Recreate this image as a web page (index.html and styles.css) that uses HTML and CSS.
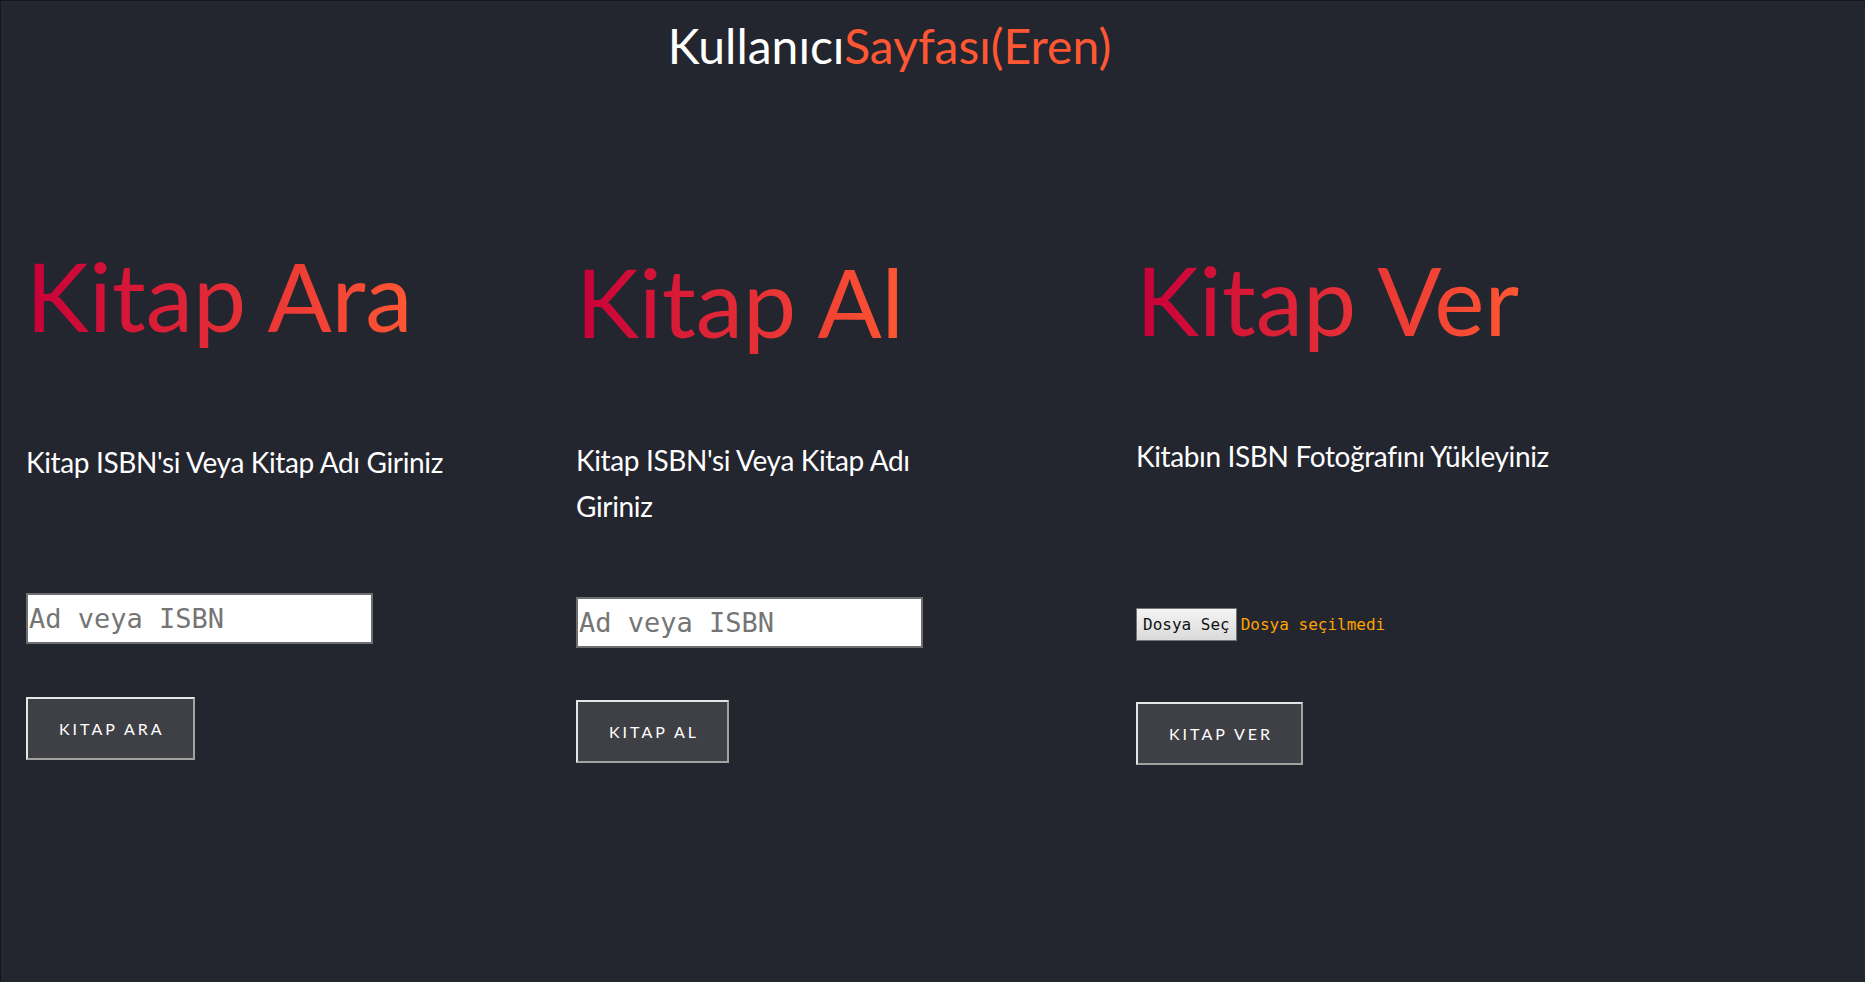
FILE: index.html
```html
<!DOCTYPE html>
<html lang="tr">
<head>
<meta charset="utf-8">
<title>Kullanıcı Sayfası</title>
<link rel="stylesheet" href="styles.css">
</head>
<body>
<header class="page-header">
  <h1 class="page-title"><span class="title-main">Kullanıcı</span><span class="title-accent">Sayfası(Eren)</span></h1>
</header>
<main class="panels">
  <section class="panel panel--ara">
    <h2 class="panel-title"><span class="grad">Kitap Ara</span></h2>
    <p class="panel-text">Kitap ISBN'si Veya Kitap Adı Giriniz</p>
    <input class="isbn-input" type="text" placeholder="Ad veya ISBN">
    <button class="action-btn" type="button">KITAP ARA</button>
  </section>
  <section class="panel panel--al">
    <h2 class="panel-title"><span class="grad">Kitap Al</span></h2>
    <p class="panel-text">Kitap ISBN'si Veya Kitap Adı Giriniz</p>
    <input class="isbn-input" type="text" placeholder="Ad veya ISBN">
    <button class="action-btn" type="button">KITAP AL</button>
  </section>
  <section class="panel panel--ver">
    <h2 class="panel-title"><span class="grad">Kitap Ver</span></h2>
    <p class="panel-text">Kitabın ISBN Fotoğrafını Yükleyiniz</p>
    <div class="file-row">
      <span class="file-btn">Dosya Seç</span>
      <span class="file-status">Dosya seçilmedi</span>
    </div>
    <button class="action-btn" type="button">KITAP VER</button>
  </section>
</main>
</body>
</html>
```
FILE: styles.css
```css
html, body {
  margin: 0;
  padding: 0;
}
body {
  background: #23252f;
  border-top: 1px solid #15161b;
  border-left: 1px solid #15161b;
  min-height: 981px;
  box-sizing: border-box;
  font-family: Lato, "Open Sans", sans-serif;
  color: #ffffff;
  overflow: hidden;
}
.page-header {
  padding: 15px 87px 0 0;
  text-align: center;
}
.page-title {
  margin: 0;
  font-size: 48px;
  line-height: 60px;
  font-weight: 400;
}
.title-main { color: #ffffff; }
.title-accent { color: #ff5733; }

.panels {
  display: flex;
  align-items: flex-start;
  padding-left: 25px;
}
.panel {
  display: flex;
  flex-direction: column;
  align-items: flex-start;
}
.panel--ara { width: 550px; }
.panel--al { width: 560px; }
.panel--ver { width: 600px; }

.panel-title {
  margin: 162px 0 0;
  font-size: 95px;
  line-height: 114px;
  font-weight: 400;
}
.grad {
  display: inline-block;
  background: linear-gradient(to right, #c70039, #ff5733);
  -webkit-background-clip: text;
  background-clip: text;
  color: transparent;
}
.panel-text {
  margin: 87px 0 0;
  font-size: 28px;
  line-height: 46px;
  letter-spacing: -0.36px;
  color: #ffffff;
}
.isbn-input {
  margin: 108px 0 0;
  width: 347px;
  height: 51px;
  box-sizing: border-box;
  border: 2px solid #6e6e70;
  padding: 0 1px;
  background: #ffffff;
  font-family: "DejaVu Sans Mono", monospace;
  font-size: 27px;
  color: #222;
  outline: none;
}
.isbn-input::placeholder {
  color: #757575;
}
.action-btn {
  margin: 53px 0 0;
  height: 63px;
  box-sizing: border-box;
  padding: 0 28px 0 31px;
  background: #3f4046;
  border: 2px solid;
  border-color: #e6e6e6 #a2a2a2 #a2a2a2 #e6e6e6;
  color: #ffffff;
  font-family: Lato, "Open Sans", sans-serif;
  font-size: 16px;
  letter-spacing: 3px;
  cursor: pointer;
}

.panel--al .panel-title { margin-top: 168px; }
.panel--al .panel-text { margin-top: 79px; width: 380px; }
.panel--al .isbn-input { margin-top: 68px; }
.panel--al .action-btn { margin-top: 52px; }

.panel--ver .panel-title { margin-top: 166px; }
.panel--ver .panel-text { margin-top: 77px; }
.panel--ver .action-btn { margin-top: 61px; }

.file-row {
  margin-top: 129px;
  display: flex;
  align-items: center;
  gap: 4px;
  font-family: "DejaVu Sans Mono", monospace;
  font-size: 16px;
}
.file-btn {
  height: 33px;
  box-sizing: border-box;
  display: inline-flex;
  align-items: center;
  padding: 0 6px;
  border: 1px solid #737373;
  background: linear-gradient(#f4f4f4, #dadada);
  color: #111111;
}
.file-status {
  color: #ffa200;
}
```
